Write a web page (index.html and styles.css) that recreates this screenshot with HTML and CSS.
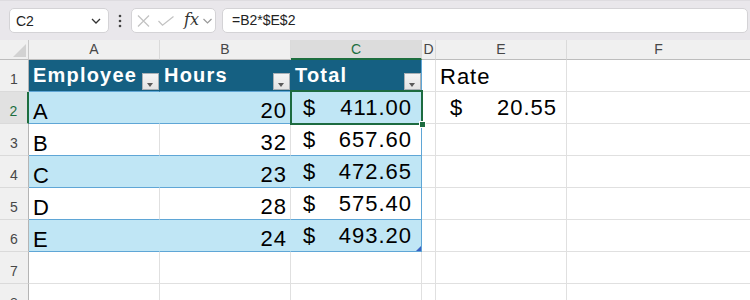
FILE: index.html
```html
<!DOCTYPE html>
<html>
<head>
<meta charset="utf-8">
<link rel="stylesheet" href="styles.css">
</head>
<body>
<div class="app">
  <div class="toolbar">
    <div class="namebox">
      <span class="nb-text">C2</span>
      <svg class="nb-chev" width="10" height="6" viewBox="0 0 10 6"><polyline points="1,1 5,5 9,1" fill="none" stroke="#333" stroke-width="1.3"/></svg>
    </div>
    <div class="dots">
      <svg width="4" height="14" viewBox="0 0 4 14"><circle cx="2" cy="2" r="1.3" fill="#444"/><circle cx="2" cy="7" r="1.3" fill="#444"/><circle cx="2" cy="12" r="1.3" fill="#444"/></svg>
    </div>
    <div class="fbuttons">
      <svg class="ic-x" width="13" height="12" viewBox="0 0 13 12"><path d="M1 0.5 L12 11.5 M12 0.5 L1 11.5" stroke="#c2c2c2" stroke-width="1.2" fill="none"/></svg>
      <svg class="ic-check" width="16" height="10" viewBox="0 0 16 10"><polyline points="0.5,5 4.5,9.2 15.5,0.5" fill="none" stroke="#c2c2c2" stroke-width="1.2"/></svg>
      <span class="fx">fx</span>
      <svg class="ic-chev" width="9" height="6" viewBox="0 0 9 6"><polyline points="0.5,1 4.5,5 8.5,1" fill="none" stroke="#999" stroke-width="1.2"/></svg>
    </div>
    <div class="formula">=B2*$E$2</div>
  </div>

  <div class="sheet">
    <div class="corner"><span class="corner-tri"></span></div>
    <div class="ch">A</div>
    <div class="ch">B</div>
    <div class="ch ch-sel">C</div>
    <div class="ch">D</div>
    <div class="ch">E</div>
    <div class="ch ch-last">F</div>

    <div class="rh">1</div>
    <div class="c th"><span class="th-text">Employee</span><span class="filter"></span></div>
    <div class="c th"><span class="th-text">Hours</span><span class="filter"></span></div>
    <div class="c th th-last"><span class="th-text">Total</span><span class="filter"></span></div>
    <div class="c"></div>
    <div class="c txt rate">Rate</div>
    <div class="c c-last"></div>

    <div class="rh rh-sel">2</div>
    <div class="c band txt">A</div>
    <div class="c band num">20</div>
    <div class="c band acct tlast"><span>$</span><span>411.00</span><span class="sel"><span class="handle"></span></span></div>
    <div class="c"></div>
    <div class="c acct acct-e"><span>$</span><span>20.55</span></div>
    <div class="c c-last"></div>

    <div class="rh">3</div>
    <div class="c plain txt">B</div>
    <div class="c plain num">32</div>
    <div class="c plain acct tlast"><span>$</span><span>657.60</span></div>
    <div class="c"></div>
    <div class="c"></div>
    <div class="c c-last"></div>

    <div class="rh">4</div>
    <div class="c band txt">C</div>
    <div class="c band num">23</div>
    <div class="c band acct tlast"><span>$</span><span>472.65</span></div>
    <div class="c"></div>
    <div class="c"></div>
    <div class="c c-last"></div>

    <div class="rh">5</div>
    <div class="c plain txt">D</div>
    <div class="c plain num">28</div>
    <div class="c plain acct tlast"><span>$</span><span>575.40</span></div>
    <div class="c"></div>
    <div class="c"></div>
    <div class="c c-last"></div>

    <div class="rh">6</div>
    <div class="c band txt">E</div>
    <div class="c band num">24</div>
    <div class="c band acct tlast"><span>$</span><span>493.20</span><span class="resize"></span></div>
    <div class="c"></div>
    <div class="c"></div>
    <div class="c c-last"></div>

    <div class="rh">7</div>
    <div class="c"></div>
    <div class="c"></div>
    <div class="c"></div>
    <div class="c"></div>
    <div class="c"></div>
    <div class="c c-last"></div>

    <div class="rh">8</div>
    <div class="c"></div>
    <div class="c"></div>
    <div class="c"></div>
    <div class="c"></div>
    <div class="c"></div>
    <div class="c c-last"></div>
  </div>
</div>
</body>
</html>
```

FILE: styles.css
```css
* { box-sizing: border-box; }
html, body {
  margin: 0;
  padding: 0;
  width: 750px;
  height: 300px;
  overflow: hidden;
  background: #ffffff;
  font-family: "Liberation Sans", Arial, sans-serif;
}
.app { width: 750px; height: 300px; overflow: hidden; }

/* toolbar */
.toolbar {
  height: 40px;
  background: #e9e7eb;
  border-top: 1px solid #dedce0;
  display: flex;
  align-items: flex-start;
  padding-top: 7px;
  padding-left: 9px;
}
.namebox {
  width: 100px;
  height: 25px;
  background: #fff;
  border: 1px solid #d4d3d6;
  border-radius: 5px;
  display: flex;
  align-items: center;
  padding-left: 6px;
  padding-right: 7px;
  justify-content: space-between;
}
.nb-text { font-size: 14px; color: #222; }
.dots {
  width: 22px;
  height: 25px;
  display: flex;
  align-items: center;
  justify-content: center;
}
.fbuttons {
  width: 85px;
  height: 25px;
  background: #fff;
  border: 1px solid #d4d3d6;
  border-radius: 5px;
  display: flex;
  align-items: center;
  padding-left: 5px;
}
.ic-x { margin-right: 8px; }
.ic-check { margin-top: 1px; margin-right: 10px; }
.fx {
  font-family: "DejaVu Serif", "Liberation Serif", serif;
  font-style: italic;
  font-size: 16px;
  color: #333;
  margin-top: -3px;
  margin-right: 4px;
}
.ic-chev { margin-top: 1px; }
.formula {
  flex: 1;
  margin-left: 6px;
  margin-right: 2px;
  height: 25px;
  background: #fff;
  border: 1px solid #d4d3d6;
  border-radius: 5px;
  font-size: 14px;
  color: #222;
  padding-left: 9px;
  line-height: 23px;
}

/* sheet grid */
.sheet {
  display: grid;
  grid-template-columns: 29px 131px 131px 131px 14px 131px 1fr;
  grid-template-rows: 20px repeat(8, 32px);
}
.corner {
  background: #f0f0f0;
  border-right: 1px solid #c8c8c8;
  border-bottom: 1px solid #bdbdbd;
  position: relative;
}
.corner-tri {
  position: absolute;
  right: 2px;
  bottom: 2px;
  width: 13px;
  height: 13px;
  background: #d2d2d2;
  clip-path: polygon(100% 0, 100% 100%, 0 100%);
}
.ch {
  background: #f0f0f0;
  border-right: 1px solid #dadada;
  border-bottom: 1px solid #bdbdbd;
  font-size: 14px;
  color: #474747;
  text-align: center;
  line-height: 19px;
}
.ch-last { border-right: none; }
.ch-sel {
  background: #dcdcdc;
  color: #1d6e3f;
  border-bottom: 2px solid #1d6e3f;
}
.rh {
  background: #f0f0f0;
  border-right: 1px solid #b4b4b4;
  border-bottom: 1px solid #dadada;
  font-size: 14px;
  color: #474747;
  text-align: center;
  line-height: 38px;
}
.rh-sel {
  background: #e1e1e1;
  color: #1d6e3f;
  border-right: 2px solid #1d6e3f;
}

/* cells */
.c {
  border-right: 1px solid #e0e0e0;
  border-bottom: 1px solid #e0e0e0;
  position: relative;
  display: flex;
  align-items: flex-end;
  font-size: 22px;
  letter-spacing: 1px;
  line-height: 20px;
  color: #000;
  white-space: nowrap;
}
.c-last { border-right: none; }
.txt { padding-left: 4px; padding-bottom: 1.5px; }
.num { justify-content: flex-end; padding-right: 3px; padding-bottom: 2px; }
.acct {
  justify-content: space-between;
  padding-left: 12px;
  padding-right: 9px;
  padding-bottom: 5px;
}
.acct-e { padding-left: 14px; padding-right: 9px; }
.rate { padding-bottom: 4px; }

.th {
  background: #156082;
  border-right-color: #156082;
  border-bottom-color: #5fa6d6;
  color: #fff;
  font-weight: bold;
  font-size: 20px;
  letter-spacing: 1.2px;
  padding-left: 4px;
  padding-bottom: 6px;
}
.th-last { border-right-color: #5fa6d6; }
.band {
  background: #c0e6f5;
  border-right-color: #c0e6f5;
  border-bottom-color: #5fa6d6;
}
.plain { border-bottom-color: #5fa6d6; }
.tlast { border-right-color: #5fa6d6; }

.filter {
  position: absolute;
  right: 0;
  bottom: 1px;
  width: 17px;
  height: 17px;
  background: linear-gradient(#f4f4f4, #e4e4e4);
  border: 1px solid #a9b0b5;
}
.filter::after {
  content: "";
  position: absolute;
  left: 4px;
  top: 9px;
  width: 0;
  height: 0;
  border-left: 3.5px solid transparent;
  border-right: 3.5px solid transparent;
  border-top: 4px solid #5a5a5a;
}

.sel {
  position: absolute;
  top: -2px;
  left: -1px;
  right: -2px;
  bottom: -2px;
  border: 2px solid #1d6b40;
  z-index: 2;
}
.handle {
  position: absolute;
  right: -5px;
  bottom: -5px;
  width: 7px;
  height: 7px;
  background: #1d6b40;
  border: 1px solid #fff;
}
.resize {
  position: absolute;
  right: 0;
  bottom: 0;
  width: 5px;
  height: 5px;
  background: #3a62c4;
  clip-path: polygon(100% 0, 100% 100%, 0 100%);
}
```
